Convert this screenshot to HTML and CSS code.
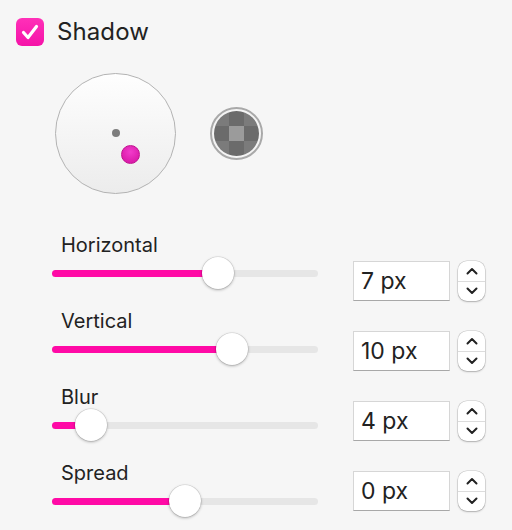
FILE: index.html
```html
<!DOCTYPE html>
<html>
<head>
<meta charset="utf-8">
<link rel="stylesheet" href="styles.css">
</head>
<body>
<div class="panel">
  <div class="header">
    <span class="checkbox">
      <svg width="28" height="28" viewBox="0 0 28 28"><path d="M7.5 14.5 L12 19.5 L20.5 8.5" fill="none" stroke="#fff" stroke-width="3.2" stroke-linecap="round" stroke-linejoin="round"/></svg>
    </span>
    <span class="title">Shadow</span>
  </div>

  <div class="pickers">
    <div class="pad">
      <span class="origin"></span>
      <span class="handle"></span>
    </div>
    <div class="swatch"><div class="checker"></div></div>
  </div>

  <div class="controls">
    <div class="sliders">
      <div class="slider-row">
        <div class="label">Horizontal</div>
        <div class="track"><div class="fill" style="width:62.4%"></div><div class="knob" style="left:62.4%"></div></div>
      </div>
      <div class="slider-row">
        <div class="label">Vertical</div>
        <div class="track"><div class="fill" style="width:67.7%"></div><div class="knob" style="left:67.7%"></div></div>
      </div>
      <div class="slider-row">
        <div class="label">Blur</div>
        <div class="track"><div class="fill" style="width:14.7%"></div><div class="knob" style="left:14.7%"></div></div>
      </div>
      <div class="slider-row">
        <div class="label">Spread</div>
        <div class="track"><div class="fill" style="width:50%"></div><div class="knob" style="left:50%"></div></div>
      </div>
    </div>

    <div class="inputs">
      <div class="input-row">
        <div class="field">7 px</div>
        <div class="stepper"><span class="up"><svg width="12" height="8" viewBox="0 0 12 8"><path d="M1.5 6.5 L6 2 L10.5 6.5" fill="none" stroke="#222" stroke-width="2" stroke-linecap="round" stroke-linejoin="round"/></svg></span><span class="down"><svg width="12" height="8" viewBox="0 0 12 8"><path d="M1.5 1.5 L6 6 L10.5 1.5" fill="none" stroke="#222" stroke-width="2" stroke-linecap="round" stroke-linejoin="round"/></svg></span></div>
      </div>
      <div class="input-row">
        <div class="field">10 px</div>
        <div class="stepper"><span class="up"><svg width="12" height="8" viewBox="0 0 12 8"><path d="M1.5 6.5 L6 2 L10.5 6.5" fill="none" stroke="#222" stroke-width="2" stroke-linecap="round" stroke-linejoin="round"/></svg></span><span class="down"><svg width="12" height="8" viewBox="0 0 12 8"><path d="M1.5 1.5 L6 6 L10.5 1.5" fill="none" stroke="#222" stroke-width="2" stroke-linecap="round" stroke-linejoin="round"/></svg></span></div>
      </div>
      <div class="input-row">
        <div class="field">4 px</div>
        <div class="stepper"><span class="up"><svg width="12" height="8" viewBox="0 0 12 8"><path d="M1.5 6.5 L6 2 L10.5 6.5" fill="none" stroke="#222" stroke-width="2" stroke-linecap="round" stroke-linejoin="round"/></svg></span><span class="down"><svg width="12" height="8" viewBox="0 0 12 8"><path d="M1.5 1.5 L6 6 L10.5 1.5" fill="none" stroke="#222" stroke-width="2" stroke-linecap="round" stroke-linejoin="round"/></svg></span></div>
      </div>
      <div class="input-row">
        <div class="field">0 px</div>
        <div class="stepper"><span class="up"><svg width="12" height="8" viewBox="0 0 12 8"><path d="M1.5 6.5 L6 2 L10.5 6.5" fill="none" stroke="#222" stroke-width="2" stroke-linecap="round" stroke-linejoin="round"/></svg></span><span class="down"><svg width="12" height="8" viewBox="0 0 12 8"><path d="M1.5 1.5 L6 6 L10.5 1.5" fill="none" stroke="#222" stroke-width="2" stroke-linecap="round" stroke-linejoin="round"/></svg></span></div>
      </div>
    </div>
  </div>
</div>
</body>
</html>
```

FILE: styles.css
```css
html, body {
  margin: 0;
  padding: 0;
  background: #f6f6f6;
}
body {
  width: 512px;
  height: 530px;
  overflow: hidden;
  font-family: "Inter", "Roboto", sans-serif;
  color: #222;
}
.panel {
  padding: 18px 0 0 16px;
}
.header {
  display: flex;
  align-items: center;
  gap: 13px;
  height: 28px;
}
.checkbox {
  width: 28px;
  height: 28px;
  border-radius: 6px;
  background: linear-gradient(#ff30b8, #f513a8);
  display: block;
}
.checkbox svg { display: block; }
.title {
  font-size: 24px;
  line-height: 28px;
  letter-spacing: 0.1px;
}
.pickers {
  display: flex;
  align-items: center;
  gap: 34px;
  margin: 27px 0 0 39px;
}
.pad {
  position: relative;
  width: 119px;
  height: 119px;
  border-radius: 50%;
  border: 1.5px solid #b3b3b3;
  background: linear-gradient(#fefefe, #ececec);
}
.origin {
  position: absolute;
  left: 56px;
  top: 55px;
  width: 8px;
  height: 8px;
  border-radius: 50%;
  background: #7d7d7d;
}
.handle {
  position: absolute;
  left: 65px;
  top: 71px;
  width: 17px;
  height: 17px;
  border-radius: 50%;
  background: radial-gradient(circle at 50% 35%, #f23ccb, #d3109f);
  border: 0.5px solid #c0108f;
}
.swatch {
  width: 49px;
  height: 49px;
  border-radius: 50%;
  border: 2px solid #a9a9a9;
  background: #f4f4f4;
  display: flex;
  align-items: center;
  justify-content: center;
}
.checker {
  width: 45px;
  height: 45px;
  border-radius: 50%;
  background-color: #7b7b7b;
  background-image:
    linear-gradient(#9b9b9b, #9b9b9b),
    linear-gradient(#6b6b6b, #6b6b6b),
    linear-gradient(#6b6b6b, #6b6b6b);
  background-repeat: no-repeat;
  background-size: 15px 15px, 45px 15px, 15px 45px;
  background-position: 15px 15px, 0 15px, 15px 0;
}
.controls {
  display: flex;
  margin: 39px 0 0 36px;
}
.sliders {
  display: flex;
  flex-direction: column;
  width: 266px;
}
.slider-row {
  height: 76px;
}
.label {
  font-size: 20px;
  line-height: 24px;
  padding-left: 9px;
}
.track {
  position: relative;
  margin-top: 13px;
  height: 7px;
  border-radius: 4px;
  background: #e6e6e6;
}
.fill {
  height: 7px;
  border-radius: 4px;
  background: #ff0aa6;
}
.knob {
  position: absolute;
  top: -13px;
  width: 32px;
  height: 32px;
  margin-left: -16px;
  border-radius: 50%;
  background: #fff;
  box-shadow: 0 0 0 0.5px rgba(0,0,0,0.12), 0 1px 3px rgba(0,0,0,0.3);
}
.inputs {
  display: flex;
  flex-direction: column;
  gap: 30px;
  margin: 28px 0 0 35px;
}
.input-row {
  display: flex;
  align-items: center;
  gap: 8px;
  height: 40px;
}
.field {
  box-sizing: border-box;
  width: 97px;
  height: 40px;
  background: #fff;
  border: 1px solid #d6d6d6;
  border-bottom-color: #a8a8a8;
  font-size: 23px;
  line-height: 38px;
  padding-left: 7px;
}
.stepper {
  width: 27px;
  height: 40px;
  border-radius: 9px;
  background: #fff;
  box-shadow: 0 0 0 0.5px rgba(0,0,0,0.18), 0 1px 2px rgba(0,0,0,0.22);
  display: flex;
  flex-direction: column;
}
.stepper span {
  flex: 1;
  display: flex;
  align-items: center;
  justify-content: center;
}
.stepper .up {
  border-bottom: 1px solid #dcdcdc;
  padding-top: 1px;
}
.stepper .down {
  padding-bottom: 1px;
}
.stepper svg { display: block; }
```
